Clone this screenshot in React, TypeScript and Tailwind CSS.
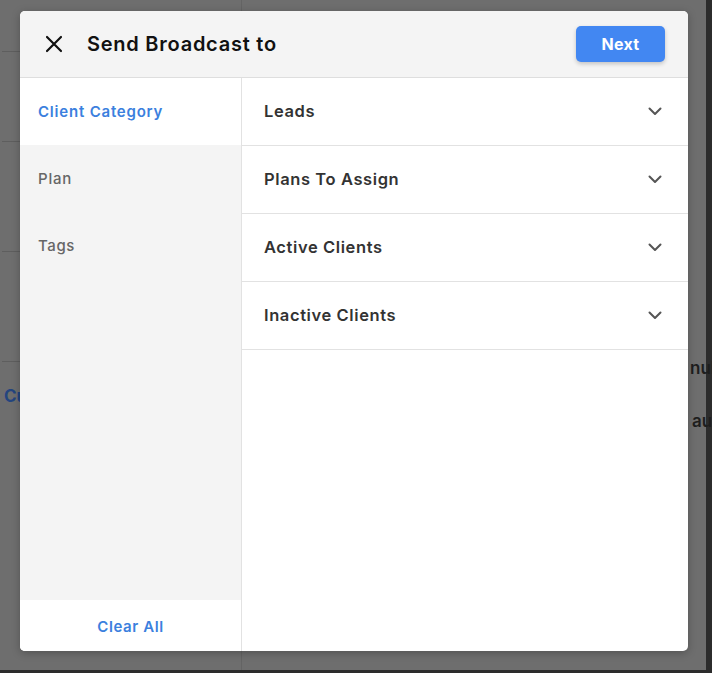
import React from "react";

const font = { fontFamily: "Inter, 'Open Sans', sans-serif" };

function Chevron() {
  return (
    <svg width="14" height="9" viewBox="0 0 14 9" fill="none">
      <path d="M1.5 1.5L7 7L12.5 1.5" stroke="#555" strokeWidth="2" strokeLinecap="round" strokeLinejoin="round" />
    </svg>
  );
}

function CloseIcon() {
  return (
    <svg width="18" height="18" viewBox="0 0 18 18" fill="none">
      <path d="M2 2L16 16M16 2L2 16" stroke="#111" strokeWidth="2.2" strokeLinecap="round" />
    </svg>
  );
}

export default function App() {
  const rows = ["Leads", "Plans To Assign", "Active Clients", "Inactive Clients"];
  return (
    <div className="relative h-[673px] w-[712px] overflow-hidden bg-[#2c2c2c]" style={font}>
      {/* dimmed background page */}
      <div className="flex h-[670px] w-[706px] bg-[#6e6e6e]">
        <div className="ml-[2px] flex w-[240px] flex-col border-r border-[#646464]">
          <div className="h-[52px] border-b border-[#5e5e5e]" />
          <div className="h-[90px] border-b border-[#5e5e5e]" />
          <div className="h-[110px] border-b border-[#5e5e5e]" />
          <div className="h-[110px] border-b border-[#5e5e5e]" />
          <div className="pl-[2px] pt-[22px] text-[17px] font-bold text-[#24457f]">Cu</div>
        </div>
        <div className="relative flex-1">
          <div className="absolute left-[448px] top-[356px] text-[17px] font-semibold text-[#1e1e1e]">nul</div>
          <div className="absolute left-[450px] top-[409px] text-[17px] font-semibold text-[#1e1e1e]">au</div>
        </div>
      </div>

      {/* modal */}
      <div className="absolute left-[20px] top-[11px] flex h-[640px] w-[668px] flex-col overflow-hidden rounded-[5px] bg-white shadow-[0_2px_8px_rgba(0,0,0,0.25)]">
        <div className="flex h-[67px] shrink-0 items-center border-b border-[#dedede] bg-[#f4f4f4] pl-[25px] pr-[23px]">
          <CloseIcon />
          <div className="ml-[24px] text-[20px] font-semibold tracking-[0.75px] text-[#111]">Send Broadcast to</div>
          <button className="ml-auto h-[36px] w-[89px] rounded-[5px] bg-[#4287f2] text-[16px] font-bold tracking-[0.3px] text-white shadow-[0_2px_4px_rgba(0,0,0,0.2)]">
            Next
          </button>
        </div>
        <div className="flex min-h-0 flex-1">
          <div className="flex w-[222px] shrink-0 flex-col border-r border-[#e2e2e2] bg-[#f4f4f4]">
            <div className="flex h-[67px] items-center bg-white pl-[18px] pt-[2px] text-[15px] font-semibold tracking-[0.8px] text-[#3b80de]">Client Category</div>
            <div className="flex h-[67px] items-center pl-[18px] pt-[2px] text-[15px] font-medium tracking-[0.8px] text-[#666]">Plan</div>
            <div className="flex h-[67px] items-center pl-[18px] pt-[2px] text-[15px] font-medium tracking-[0.6px] text-[#666]">Tags</div>
            <div className="flex-1" />
            <div className="flex h-[51px] items-center justify-center bg-white pt-[3px] text-[15px] font-semibold tracking-[0.6px] text-[#3b80de]">Clear All</div>
          </div>
          <div className="flex flex-1 flex-col">
            {rows.map((r) => (
              <div key={r} className="flex h-[68px] items-center justify-between border-b border-[#e2e2e2] pl-[22px] pr-[26px]">
                <span className="text-[16.5px] font-semibold tracking-[0.6px] text-[#333]">{r}</span>
                <Chevron />
              </div>
            ))}
          </div>
        </div>
      </div>
    </div>
  );
}
